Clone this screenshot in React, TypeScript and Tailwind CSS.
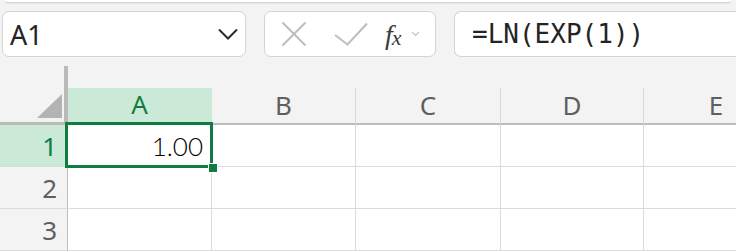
import React from 'react';

const COLS = [
  { label: 'A', w: 'w-[144px]' },
  { label: 'B', w: 'w-[144px]' },
  { label: 'C', w: 'w-[145px]' },
  { label: 'D', w: 'w-[143px]' },
  { label: 'E', w: 'w-[145px]' },
];

const ROWS = [1, 2, 3];

const headerFont = { fontFamily: '"Noto Sans", "Liberation Sans", sans-serif' };

const CloseIcon = () => (
  <svg width="26" height="26" viewBox="0 0 26 26" fill="none" stroke="#bdbdbd" strokeWidth="2">
    <path d="M1.5 1.5 L24.5 24.5 M24.5 1.5 L1.5 24.5" />
  </svg>
);

const CheckIcon = () => (
  <svg width="34" height="24" viewBox="0 0 34 24" fill="none" stroke="#bdbdbd" strokeWidth="2">
    <path d="M1 13 L13.5 22.5 L33 1.5" />
  </svg>
);

const App: React.FC = () => {
  return (
    <div className="w-[736px] h-[251px] bg-[#f3f3f3] overflow-hidden" style={headerFont}>
      {/* ribbon edge */}
      <div className="mx-[5px] h-[2px] bg-white rounded-b-md shadow-[0_1px_2px_rgba(0,0,0,0.18)]" />

      {/* name box + formula bar */}
      <div className="mt-[9px] h-[46px] flex">
        <div className="shrink-0 ml-[2px] w-[244px] h-full bg-white border border-[#d4d4d4] rounded-[7px] flex items-center pl-[7px] pr-[7px]">
          <span className="text-[27px] text-[#242424] leading-none" style={{ fontFamily: '"Noto Sans", sans-serif' }}>A1</span>
          <svg className="ml-auto" width="20" height="12" viewBox="0 0 20 12" fill="none" stroke="#2b2b2b" strokeWidth="2">
            <path d="M1 1.5 L10 10.5 L19 1.5" />
          </svg>
        </div>

        <div className="shrink-0 ml-[18px] w-[172px] h-full bg-white border border-[#d4d4d4] rounded-[7px] flex items-center">
          <div className="ml-[16px]"><CloseIcon /></div>
          <div className="ml-[27px]"><CheckIcon /></div>
          <div className="ml-[17px] flex items-end text-[#3a3a3a] leading-none pt-[2px]" style={{ fontFamily: '"Liberation Serif", serif' }}>
            <span className="italic text-[28px]">f</span>
            <span className="italic text-[22px] -ml-[1px]">x</span>
          </div>
          <svg className="ml-[9px]" width="9" height="6" viewBox="0 0 9 6" fill="none" stroke="#c4c4c4" strokeWidth="1.2">
            <path d="M1 1 L4.5 4.5 L8 1" />
          </svg>
        </div>

        <div className="shrink-0 ml-[18px] w-[300px] h-full bg-white border border-r-0 border-[#d4d4d4] rounded-l-[7px] flex items-center pl-[17px]">
          <span className="text-[26px] text-[#242424] leading-none" style={{ fontFamily: '"DejaVu Sans Mono", monospace' }}>=LN(EXP(1))</span>
        </div>
      </div>

      {/* grid */}
      <div className="mt-[9px]">
        {/* column header row */}
        <div className="flex items-end">
          <div className="w-[68px] h-[59px] shrink-0 border-r-4 border-b-[3px] border-[#bababa] flex items-end justify-end pr-[2px] pb-[4px]">
            <div className="w-[25px] h-[24px] bg-[#b3b3b3] [clip-path:polygon(100%_0,100%_100%,0_100%)]" />
          </div>
          {COLS.map((c, i) => (
            <div
              key={c.label}
              className={`${c.w} shrink-0 h-[37px] flex items-center justify-center text-[26px] leading-none border-r ${
                i === 0
                  ? 'bg-[#cae9d6] text-[#107c41] border-[#cae9d6] border-b-[3px] border-b-[#107c41]'
                  : 'text-[#5f5f5f] border-[#dadada] border-b-2 border-b-[#bdbdbd]'
              }`}
            >
              <span className="-mt-[2px]">{c.label}</span>
            </div>
          ))}
        </div>

        {/* body rows */}
        {ROWS.map((r) => (
          <div key={r} className="flex h-[42px]">
            <div
              className={`w-[68px] shrink-0 border-r border-b flex items-center justify-end pr-[10px] text-[26px] leading-none ${
                r === 1
                  ? 'bg-[#cae9d6] text-[#107c41] border-r-[#bdbdbd] border-b-[#dadada]'
                  : 'bg-[#f3f3f3] text-[#5f5f5f] border-r-[#bdbdbd] border-b-[#dadada]'
              }`}
            >
              {r}
            </div>
            {COLS.map((c, i) => (
              <div
                key={c.label}
                className={`${c.w} shrink-0 bg-white border-r border-b border-[#dcdcdc] flex items-center justify-end pr-[8px] ${
                  r === 1 && i === 0 ? 'relative z-10' : ''
                }`}
              >
                {r === 1 && i === 0 && (
                  <>
                    <span className="text-[26px] text-black font-light leading-none" style={{ fontFamily: 'Lato, "Liberation Sans", sans-serif' }}>1.00</span>
                    <div className="absolute -left-[3px] -top-[3px] w-[148px] h-[46px] border-[3px] border-[#107c41] pointer-events-none" />
                    <div className="absolute left-[140px] top-[38px] w-[10px] h-[10px] bg-[#107c41] border border-white" />
                  </>
                )}
              </div>
            ))}
          </div>
        ))}
      </div>
    </div>
  );
};

export default App;
